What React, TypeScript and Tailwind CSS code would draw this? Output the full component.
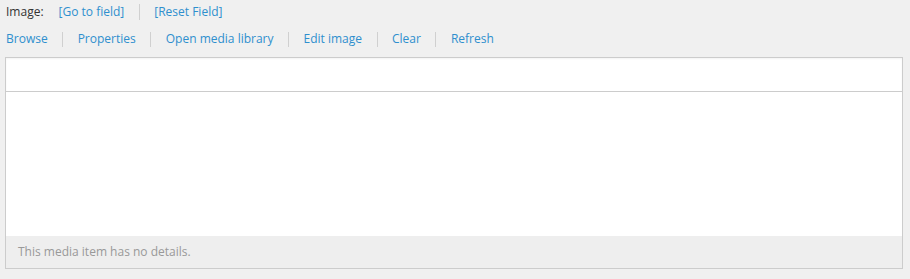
import React from "react";

const Sep = ({ h }: { h: string }) => <span className={`w-px bg-[#d0d0d0] mx-[14.5px] ${h}`} />;

export default function App() {
  const links = ["Browse", "Properties", "Open media library", "Edit image", "Clear", "Refresh"];
  return (
    <div
      className="w-[910px] h-[279px] bg-[#f0f0f0] text-[12px] leading-[18px]"
      style={{ fontFamily: '"Open Sans", "Noto Sans", sans-serif' }}
    >
      <div className="flex items-center pl-[6px] pt-[3px] h-[21px]">
        <span className="text-[#333]">Image:</span>
        <span className="ml-[15px] text-[#2e8fce]">[Go to field]</span>
        <Sep h="h-[16px]" />
        <span className="text-[#2e8fce]">[Reset Field]</span>
      </div>
      <div className="flex items-center pl-[6px] mt-[9px] h-[18px]">
        {links.map((l, i) => (
          <React.Fragment key={l}>
            {i > 0 && <Sep h="h-[15px]" />}
            <span className="text-[#2e8fce]">{l}</span>
          </React.Fragment>
        ))}
      </div>
      <div className="ml-[5px] mt-[9px] w-[898px] h-[212px] border border-[#cccccc] bg-white flex flex-col">
        <div className="h-[34px] border-b border-[#cccccc] shadow-[inset_0_1px_2px_rgba(0,0,0,0.05)]" />
        <div className="flex-1" />
        <div className="h-[32px] bg-[#eeeeee] flex items-center pl-[12px] text-[#999999]">
          This media item has no details.
        </div>
      </div>
    </div>
  );
}
